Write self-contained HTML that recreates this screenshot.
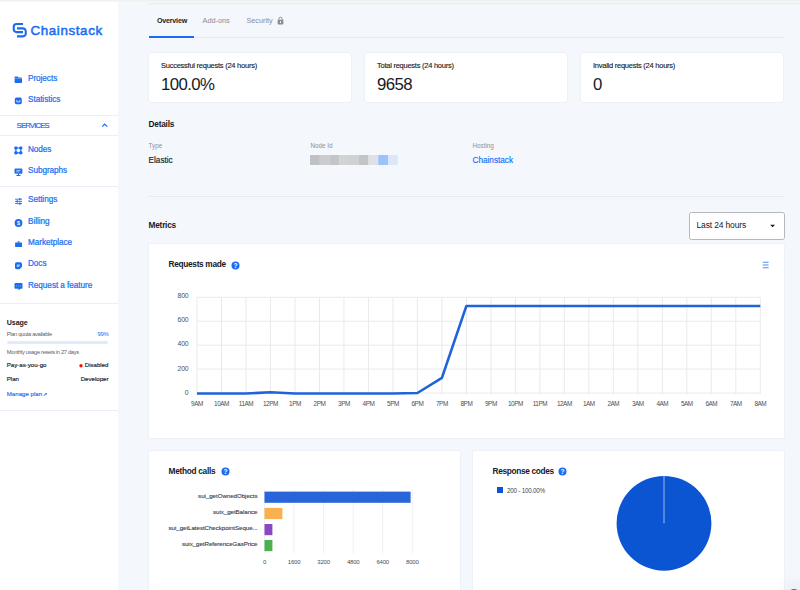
<!DOCTYPE html>
<html lang="en">
<head>
<meta charset="utf-8">
<title>Chainstack</title>
<style>
*{box-sizing:border-box;margin:0;padding:0}
html,body{width:800px;height:590px;overflow:hidden}
body{position:relative;background:#f4f7fc;font-family:"Liberation Sans",sans-serif;color:#16191f}
.abs{position:absolute}
.t{position:absolute;white-space:nowrap;line-height:1}
.card{position:absolute;background:#fff;border:1px solid #eef2f8;border-radius:2px}
.ax{font-family:"Liberation Sans",sans-serif;fill:#4a4f58}
</style>
</head>
<body>
<div class="abs" style="left:0px;top:0px;width:118px;height:590px;background:#fff;"></div>
<div class="abs" style="left:0px;top:0px;width:800px;height:1px;background:#f1f1f0;"></div>
<div class="abs" style="left:0px;top:1px;width:800px;height:1px;background:rgba(238,238,236,0.5);"></div>
<div class="abs" style="left:149px;top:3px;width:651px;height:1px;background:#e8ecf3;"></div>
<div class="abs" style="left:149px;top:4px;width:651px;height:1px;background:#f0f3f9;"></div>
<svg class="abs" style="left:10px;top:20px" width="20" height="20" viewBox="10 20 20 20" fill="none" stroke="#1a6df2" stroke-width="2.1"><path d="M23 24 H16.5 A2.75 2.75 0 0 0 13.75 26.75 V29.4 A2.75 2.75 0 0 0 16.5 32.15 H23"/><path d="M17 28.4 H23 A2.75 2.75 0 0 1 25.75 31.15 V33.65 A2.75 2.75 0 0 1 23 36.4 H17"/></svg>
<div class="t" style="top:24.00px;font-size:13.4px;color:#1a6df2;left:30.50px;letter-spacing:0.6px;-webkit-text-stroke:0.5px #1a6df2;">Chainstack</div>
<div class="t" style="top:75.00px;font-size:8.2px;color:#1a6df2;left:28.00px;letter-spacing:-0.05px;-webkit-text-stroke:0.22px #1a6df2;">Projects</div>
<div class="t" style="top:96.00px;font-size:8.2px;color:#1a6df2;left:28.00px;letter-spacing:-0.05px;-webkit-text-stroke:0.22px #1a6df2;">Statistics</div>
<div class="abs" style="left:0px;top:115px;width:118px;height:1px;background:#e9eff8;"></div>
<div class="t" style="top:122.00px;font-size:7.7px;color:#1a6df2;left:16.60px;letter-spacing:-0.8px;-webkit-text-stroke:0.2px #1a6df2;">SERVICES</div>
<svg class="abs" style="left:101px;top:122px" width="8" height="6" viewBox="0 0 8 6" ><path d="M1.2 4.6 L3.7 2.1 L6.2 4.6" fill="none" stroke="#1a6df2" stroke-width="1.2"/></svg>
<div class="abs" style="left:0px;top:135px;width:118px;height:1px;background:#e9eff8;"></div>
<div class="t" style="top:146.00px;font-size:8.2px;color:#1a6df2;left:28.00px;letter-spacing:-0.05px;-webkit-text-stroke:0.22px #1a6df2;">Nodes</div>
<div class="t" style="top:167.00px;font-size:8.2px;color:#1a6df2;left:28.00px;letter-spacing:-0.05px;-webkit-text-stroke:0.22px #1a6df2;">Subgraphs</div>
<div class="abs" style="left:0px;top:186px;width:118px;height:1px;background:#e9eff8;"></div>
<div class="t" style="top:196.00px;font-size:8.2px;color:#1a6df2;left:28.00px;letter-spacing:-0.05px;-webkit-text-stroke:0.22px #1a6df2;">Settings</div>
<div class="t" style="top:218.00px;font-size:8.2px;color:#1a6df2;left:28.00px;letter-spacing:-0.05px;-webkit-text-stroke:0.22px #1a6df2;">Billing</div>
<div class="t" style="top:239.00px;font-size:8.2px;color:#1a6df2;left:28.00px;letter-spacing:-0.05px;-webkit-text-stroke:0.22px #1a6df2;">Marketplace</div>
<div class="t" style="top:260.00px;font-size:8.2px;color:#1a6df2;left:28.00px;letter-spacing:-0.05px;-webkit-text-stroke:0.22px #1a6df2;">Docs</div>
<div class="t" style="top:282.00px;font-size:8.2px;color:#1a6df2;left:28.00px;letter-spacing:-0.05px;-webkit-text-stroke:0.22px #1a6df2;">Request a feature</div>
<div class="abs" style="left:0px;top:303px;width:118px;height:1px;background:#e9eff8;"></div>
<svg class="abs" style="left:14px;top:76px" width="9" height="9" viewBox="0 0 9 9" ><path d="M0.6 1.3 Q0.6 0.6 1.3 0.6 H3.6 L4.4 1.6 H7.3 Q8 1.600 8 2.300 V6.300 Q8 7 7.300 7 H1.300 Q0.600 7 0.600 6.300 Z" fill="#1a6df2"/><path d="M0.600 2.600 H8" stroke="#fff" stroke-width="0.450" opacity="0.7"/></svg>
<svg class="abs" style="left:14px;top:97.2px" width="9" height="9" viewBox="0 0 9 9" ><rect x="0.800" y="0.400" width="7" height="6.800" rx="1.600" fill="#1a6df2"/><path d="M2.800 3.100 V4.900 H5.800 V3.100" stroke="#fff" stroke-width="0.800" fill="none" opacity="0.900"/></svg>
<svg class="abs" style="left:14px;top:146px" width="9" height="9" viewBox="0 0 9 9" ><g fill="#1a6df2"><rect x="0.300" y="0.400" width="3.200" height="3.200" rx="1.100"/><rect x="5.200" y="0.400" width="3.200" height="3.200" rx="1.100"/><rect x="0.300" y="5.200" width="3.200" height="3.200" rx="1.100"/><rect x="5.200" y="5.200" width="3.200" height="3.200" rx="1.100"/></g><path d="M1.900 2 H6.800 V6.800 H1.900 Z" fill="none" stroke="#1a6df2" stroke-width="1.150"/></svg>
<svg class="abs" style="left:14px;top:168px" width="9" height="9" viewBox="0 0 9 9" ><g fill="#1a6df2"><rect x="0.500" y="0.400" width="7.900" height="5.400" rx="1"/><rect x="3.850" y="5.600" width="1.200" height="1.600"/><rect x="2.200" y="7" width="4.500" height="1" rx="0.400"/></g><path d="M2.300 2.400 H6.600 M2.300 3.900 H5.400" stroke="#fff" stroke-width="0.600"/></svg>
<svg class="abs" style="left:14px;top:198px" width="9" height="9" viewBox="0 0 9 9" ><path d="M1.100 1.200 H8 M1.100 3.400 H8 M1.100 5.600 H8" stroke="#1a6df2" stroke-width="0.900"/><g fill="#1a6df2"><rect x="5.200" y="0.100" width="1.300" height="2.200"/><rect x="2.600" y="2.300" width="1.300" height="2.200"/><rect x="5.200" y="4.500" width="1.300" height="2.200"/></g></svg>
<svg class="abs" style="left:14px;top:218.7px" width="9" height="9" viewBox="0 0 9 9" ><circle cx="4.500" cy="4" r="3.900" fill="#1a6df2"/><text x="4.500" y="6" font-size="5.400" font-weight="bold" fill="#fff" text-anchor="middle" font-family="Liberation Sans, sans-serif">$</text></svg>
<svg class="abs" style="left:14px;top:240.4px" width="9" height="9" viewBox="0 0 9 9" ><path d="M1.1 3 Q1.1 2.500 1.600 2.500 H7.500 Q8 2.500 8 3 V6.400 Q8 6.900 7.500 6.900 H1.600 Q1.100 6.900 1.100 6.400 Z" fill="#1a6df2"/><path d="M3.300 2.600 L3.800 1.200 H5.300 L5.800 2.600 Z" fill="#1a6df2"/></svg>
<svg class="abs" style="left:14px;top:261.9px" width="9" height="9" viewBox="0 0 9 9" ><path d="M1 1.900 Q1 0.300 2.600 0.300 H6.400 Q8 0.300 8 1.900 V4.800 L5.600 7.200 H2.600 Q1 7.200 1 5.600 Z" fill="#1a6df2"/><path d="M2.800 2.400 H5.900 V3.700 L4.700 5 H2.800 Z" fill="#fff" opacity="0.600"/></svg>
<svg class="abs" style="left:14px;top:283px" width="9" height="9" viewBox="0 0 9 9" ><path d="M0.500 0.800 Q0.500 0 1.300 0 H7.700 Q8.500 0 8.500 0.800 V5 Q8.500 5.800 7.700 5.800 H6.300 L4.900 7.300 L4.300 5.800 H1.300 Q0.500 5.800 0.500 5 Z" fill="#1a6df2"/><path d="M2.300 3 H3 M4.150 3 H4.850 M6 3 H6.700" stroke="#fff" stroke-width="0.700" opacity="0.850"/></svg>
<div class="t" style="top:320.00px;font-size:7.1px;color:#16191f;left:6.80px;font-weight:bold;letter-spacing:-0.1px;">Usage</div>
<div class="t" style="top:332.00px;font-size:5.8px;color:#5d636d;left:6.80px;letter-spacing:-0.36px;">Plan quota available</div>
<div class="t" style="top:332.00px;font-size:5.8px;color:#1a6df2;right:691.70px;letter-spacing:-0.3px;">99%</div>
<div class="abs" style="left:6.8px;top:340.6px;width:101.7px;height:3.6px;background:#dfebfd;border-radius:2px"></div>
<div class="t" style="top:350.00px;font-size:5.8px;color:#5d636d;left:6.80px;letter-spacing:-0.36px;">Monthly usage resets in 27 days</div>
<div class="t" style="top:362.00px;font-size:6.1px;color:#16191f;left:6.80px;-webkit-text-stroke:0.15px #16191f;">Pay-as-you-go</div>
<svg class="abs" style="left:78px;top:363px" width="6" height="6" viewBox="0 0 6 6" ><circle cx="3" cy="2.750" r="1.700" fill="#f41212"/></svg>
<div class="t" style="top:362.00px;font-size:6.1px;color:#16191f;right:691.50px;-webkit-text-stroke:0.15px #16191f;">Disabled</div>
<div class="t" style="top:376.00px;font-size:6.1px;color:#16191f;left:6.80px;-webkit-text-stroke:0.15px #16191f;">Plan</div>
<div class="t" style="top:376.00px;font-size:6.1px;color:#16191f;right:691.50px;-webkit-text-stroke:0.15px #16191f;">Developer</div>
<div class="t" style="top:391.00px;font-size:6.1px;color:#1a6df2;left:6.80px;-webkit-text-stroke:0.15px #1a6df2;">Manage plan<span style="font-size:5px;margin-left:1px;position:relative;top:-0.3px">↗</span></div>
<div class="abs" style="left:0px;top:410px;width:118px;height:1px;background:#e9eff8;"></div>
<div class="t" style="top:18.00px;font-size:7.1px;color:#16191f;left:157.00px;font-weight:bold;letter-spacing:-0.2px;">Overview</div>
<div class="t" style="top:17.00px;font-size:7.3px;color:#898e96;left:202.60px;">Add-ons</div>
<div class="t" style="top:17.00px;font-size:7.3px;color:#898e96;left:246.40px;">Security</div>
<svg class="abs" style="left:277px;top:16px" width="7" height="9" viewBox="0 0 7 9" ><rect x="0.600" y="3.800" width="5.800" height="4.700" rx="0.900" fill="#898e96"/><path d="M1.900 4 V2.800 A1.600 1.600 0 0 1 5.100 2.800 V4" stroke="#898e96" stroke-width="1" fill="none"/><rect x="3" y="5.300" width="1" height="1.600" fill="#fff"/></svg>
<div class="abs" style="left:149px;top:37px;width:635px;height:1px;background:#e6eaf1;"></div>
<div class="abs" style="left:149px;top:35.8px;width:45.4px;height:2.2px;background:#1a6df2;"></div>
<div class="card" style="left:148px;top:52px;width:204px;height:51px;border-radius:4px"></div>
<div class="t" style="top:62.00px;font-size:7.5px;color:#16191f;left:161.00px;letter-spacing:-0.25px;-webkit-text-stroke:0.12px #16191f;">Successful requests (24 hours)</div>
<div class="t" style="top:77.00px;font-size:16.8px;color:#16191f;left:161.00px;letter-spacing:-0.6px;">100.0%</div>
<div class="card" style="left:364px;top:52px;width:204px;height:51px;border-radius:4px"></div>
<div class="t" style="top:62.00px;font-size:7.5px;color:#16191f;left:377.00px;letter-spacing:-0.25px;-webkit-text-stroke:0.12px #16191f;">Total requests (24 hours)</div>
<div class="t" style="top:77.00px;font-size:16.8px;color:#16191f;left:377.00px;letter-spacing:-0.6px;">9658</div>
<div class="card" style="left:580px;top:52px;width:204px;height:51px;border-radius:4px"></div>
<div class="t" style="top:62.00px;font-size:7.5px;color:#16191f;left:593.00px;letter-spacing:-0.25px;-webkit-text-stroke:0.12px #16191f;">Invalid requests (24 hours)</div>
<div class="t" style="top:77.00px;font-size:16.8px;color:#16191f;left:593.00px;letter-spacing:-0.6px;">0</div>
<div class="t" style="top:120.00px;font-size:8.3px;color:#16191f;left:148.60px;font-weight:bold;letter-spacing:-0.25px;">Details</div>
<div class="t" style="top:143.00px;font-size:6.3px;color:#8b9098;left:148.60px;">Type</div>
<div class="t" style="top:157.00px;font-size:8.2px;color:#16191f;left:148.60px;-webkit-text-stroke:0.15px #16191f;">Elastic</div>
<div class="t" style="top:143.00px;font-size:6.3px;color:#8b9098;left:310.50px;">Node Id</div>
<div class="t" style="top:143.00px;font-size:6.3px;color:#8b9098;left:472.50px;">Hosting</div>
<div class="t" style="top:157.00px;font-size:8.2px;color:#1a6df2;left:472.50px;-webkit-text-stroke:0.15px #1a6df2;">Chainstack</div>
<svg class="abs" style="left:310px;top:155px" width="88" height="10" viewBox="0 0 88 10" ><rect x="0.00" y="0" width="9.850" height="10" fill="#bfc1c4"/><rect x="9.75" y="0" width="9.850" height="10" fill="#cacccf"/><rect x="19.50" y="0" width="9.850" height="10" fill="#c3c5c8"/><rect x="29.25" y="0" width="9.850" height="10" fill="#d1d3d5"/><rect x="39.00" y="0" width="9.850" height="10" fill="#cfd1d3"/><rect x="48.75" y="0" width="9.850" height="10" fill="#c2c4c7"/><rect x="58.50" y="0" width="9.850" height="10" fill="#dee1e5"/><rect x="68.25" y="0" width="9.850" height="10" fill="#9bc3f9"/><rect x="78.00" y="0" width="9.850" height="10" fill="#dce8fa"/></svg>
<div class="abs" style="left:149px;top:196px;width:635px;height:1px;background:#e6eaf1;"></div>
<div class="t" style="top:221.00px;font-size:8.3px;color:#16191f;left:148.60px;font-weight:bold;letter-spacing:-0.25px;">Metrics</div>
<div class="abs" style="left:688.7px;top:211.7px;width:96px;height:28px;background:#fff;border:1px solid #b4b7bc;border-radius:2.5px"></div>
<div class="t" style="top:221.00px;font-size:8.5px;color:#16191f;left:696.50px;letter-spacing:-0.15px;">Last 24 hours</div>
<svg class="abs" style="left:769px;top:224px" width="7" height="4" viewBox="0 0 7 4" ><path d="M1.200 0.700 H6 L3.600 3.300 Z" fill="#16191f"/></svg>
<div class="card" style="left:148px;top:243px;width:636.500px;height:196px"></div>
<div class="t" style="top:260.00px;font-size:8.3px;color:#16191f;left:168.60px;font-weight:bold;letter-spacing:-0.32px;">Requests made</div>
<svg class="abs" style="left:231.0px;top:260.70000000000005px" width="9" height="9" viewBox="0 0 9 9" ><circle cx="4.500" cy="4.500" r="4" fill="#1a6df2"/><text x="4.500" y="6.850" font-size="6.600" font-weight="bold" fill="#fff" text-anchor="middle" font-family="Liberation Sans, sans-serif">?</text></svg>
<svg class="abs" style="left:762px;top:261px" width="8" height="8" viewBox="0 0 8 8" ><path d="M0.800 1.300 H6.600 M0.800 4 H6.600 M0.800 6.700 H6.600" stroke="#4a8ff5" stroke-width="1.100"/></svg>
<svg class="abs" style="left:149px;top:280px" width="635" height="140" viewBox="149 280 635 140" ><g stroke="#e8eaed" stroke-width="1" fill="none"><path d="M197.0 297.30 H760.3 M197.0 321.23 H760.3 M197.0 345.15 H760.3 M197.0 369.07 H760.3 M197.0 393.00 H760.3 M197.00 297.3 V394.5 M221.49 297.3 V394.5 M245.98 297.3 V394.5 M270.47 297.3 V394.5 M294.97 297.3 V394.5 M319.46 297.3 V394.5 M343.95 297.3 V394.5 M368.44 297.3 V394.5 M392.93 297.3 V394.5 M417.42 297.3 V394.5 M441.91 297.3 V394.5 M466.40 297.3 V394.5 M490.90 297.3 V394.5 M515.39 297.3 V394.5 M539.88 297.3 V394.5 M564.37 297.3 V394.5 M588.86 297.3 V394.5 M613.35 297.3 V394.5 M637.84 297.3 V394.5 M662.33 297.3 V394.5 M686.83 297.3 V394.5 M711.32 297.3 V394.5 M735.81 297.3 V394.5 M760.30 297.3 V394.5 "/></g><g class="ax" text-anchor="end" style="font-size:6.800px;letter-spacing:-0.150px"><text x="188.500" y="298.10">800</text><text x="188.500" y="322.25">600</text><text x="188.500" y="346.40">400</text><text x="188.500" y="370.55">200</text><text x="188.500" y="394.70">0</text></g><g class="ax" text-anchor="middle" style="font-size:6.400px;letter-spacing:-0.450px"><text x="197.00" y="405.800">9AM</text><text x="221.49" y="405.800">10AM</text><text x="245.98" y="405.800">11AM</text><text x="270.47" y="405.800">12PM</text><text x="294.97" y="405.800">1PM</text><text x="319.46" y="405.800">2PM</text><text x="343.95" y="405.800">3PM</text><text x="368.44" y="405.800">4PM</text><text x="392.93" y="405.800">5PM</text><text x="417.42" y="405.800">6PM</text><text x="441.91" y="405.800">7PM</text><text x="466.40" y="405.800">8PM</text><text x="490.90" y="405.800">9PM</text><text x="515.39" y="405.800">10PM</text><text x="539.88" y="405.800">11PM</text><text x="564.37" y="405.800">12AM</text><text x="588.86" y="405.800">1AM</text><text x="613.35" y="405.800">2AM</text><text x="637.84" y="405.800">3AM</text><text x="662.33" y="405.800">4AM</text><text x="686.83" y="405.800">5AM</text><text x="711.32" y="405.800">6AM</text><text x="735.81" y="405.800">7AM</text><text x="760.30" y="405.800">8AM</text></g><polyline fill="none" stroke="#1f63d9" stroke-width="2.600" stroke-linejoin="round" points="197.00,393.50 221.49,393.50 245.98,393.50 270.47,392.30 294.97,393.50 319.46,393.50 343.95,393.50 368.44,393.50 392.93,393.50 417.42,393.02 441.91,377.83 466.40,305.93 490.90,305.93 515.39,305.93 539.88,305.93 564.37,305.93 588.86,305.93 613.35,305.93 637.84,305.93 662.33,305.93 686.83,305.93 711.32,305.93 735.81,305.93 760.30,305.93"/></svg>
<div class="card" style="left:148px;top:450px;width:312.500px;height:150px"></div>
<div class="t" style="top:467.00px;font-size:8.3px;color:#16191f;left:168.60px;font-weight:bold;letter-spacing:-0.3px;">Method calls</div>
<svg class="abs" style="left:221.0px;top:467.1px" width="9" height="9" viewBox="0 0 9 9" ><circle cx="4.500" cy="4.500" r="4" fill="#1a6df2"/><text x="4.500" y="6.850" font-size="6.600" font-weight="bold" fill="#fff" text-anchor="middle" font-family="Liberation Sans, sans-serif">?</text></svg>
<svg class="abs" style="left:149px;top:485px" width="311" height="90" viewBox="149 485 311 90" ><g stroke="#eef0f2" stroke-width="1"><path d="M264.50 489.500 V553.400 M294.06 489.500 V553.400 M323.62 489.500 V553.400 M353.18 489.500 V553.400 M382.74 489.500 V553.400 M412.30 489.500 V553.400 "/></g><rect x="264.5" y="491.6" width="146.1" height="11.200" fill="#2765d8"/><rect x="264.5" y="507.9" width="17.9" height="11.200" fill="#f9b04f"/><rect x="264.5" y="524" width="7.9" height="11.200" fill="#8b48c4"/><rect x="264.5" y="540" width="7.9" height="11.200" fill="#4caf50"/><g class="ax" text-anchor="end" style="font-size:6.200px;letter-spacing:-0.060px;fill:#3c4047;stroke:#3c4047;stroke-width:0.120px"><text x="257.500" y="498.10">sui_getOwnedObjects</text><text x="257.500" y="514.30">suix_getBalance</text><text x="257.500" y="530.40">sui_getLatestCheckpointSeque...</text><text x="257.500" y="546.40">suix_getReferenceGasPrice</text></g><g class="ax" text-anchor="middle" style="font-size:6px;letter-spacing:-0.200px"><text x="264.50" y="564.300">0</text><text x="294.06" y="564.300">1600</text><text x="323.62" y="564.300">3200</text><text x="353.18" y="564.300">4800</text><text x="382.74" y="564.300">6400</text><text x="412.30" y="564.300">8000</text></g></svg>
<div class="card" style="left:472px;top:450px;width:312.500px;height:150px"></div>
<div class="t" style="top:467.00px;font-size:8.3px;color:#16191f;left:492.50px;font-weight:bold;letter-spacing:-0.34px;">Response codes</div>
<svg class="abs" style="left:558.2px;top:467.1px" width="9" height="9" viewBox="0 0 9 9" ><circle cx="4.500" cy="4.500" r="4" fill="#1a6df2"/><text x="4.500" y="6.850" font-size="6.600" font-weight="bold" fill="#fff" text-anchor="middle" font-family="Liberation Sans, sans-serif">?</text></svg>
<div class="abs" style="left:497px;top:487px;width:6px;height:6px;background:#0c55d2;"></div>
<div class="t" style="top:488.00px;font-size:6.3px;color:#43474f;left:507.00px;letter-spacing:-0.24px;">200 - 100.00%</div>
<svg class="abs" style="left:610px;top:470px" width="110" height="110" viewBox="610 470 110 110" ><circle cx="664" cy="523.300" r="47.400" fill="#0c55d2"/><path d="M664 476 V523.300" stroke="#a8c3ef" stroke-width="0.900"/></svg>
<div class="abs" style="left:788px;top:588.5px;width:12px;height:12px;background:#1a6df2;border-radius:50%;box-shadow:0 0 14px 6px rgba(40,60,90,0.05)"></div>
</body>
</html>
